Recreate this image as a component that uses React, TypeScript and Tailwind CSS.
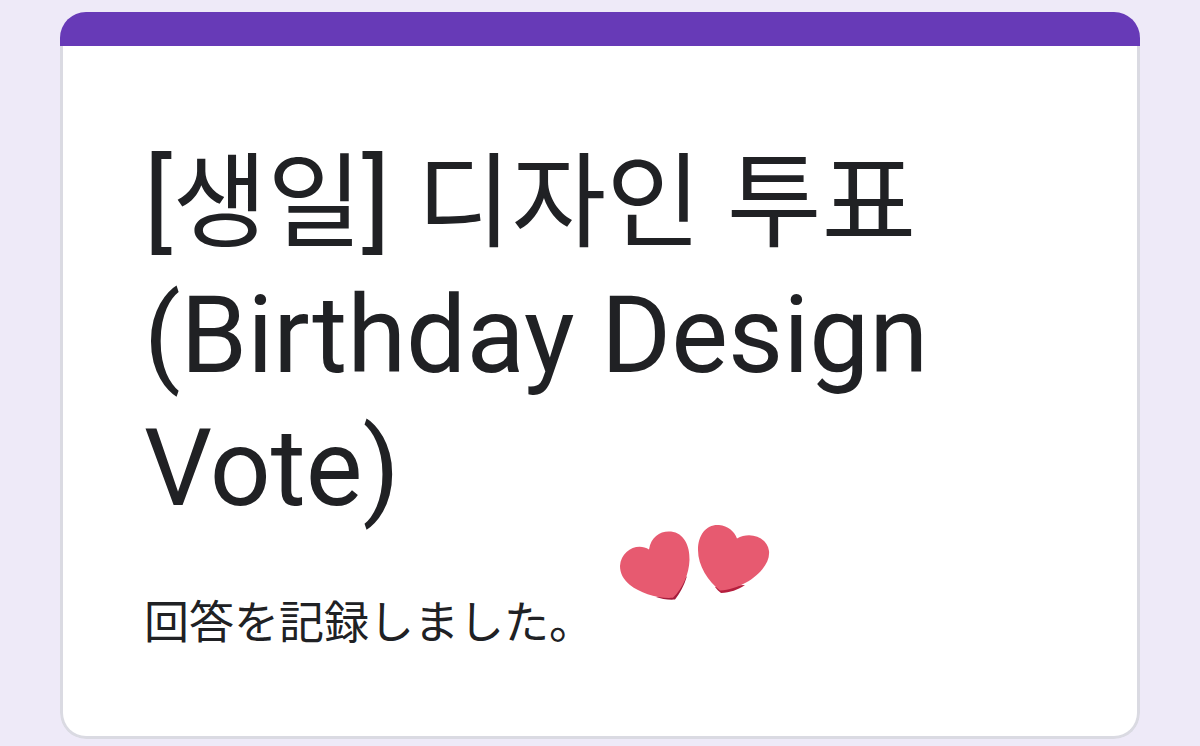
function Hearts() {
  return (
    <svg viewBox="0 0 190 110" className="absolute top-[498px] left-[540px] h-[110px] w-[190px]" role="img" aria-label="Two hearts">
      <path d="M75 89.5 C69 90 61 89 56 87 L70 84 L87 66 C84 76 80 83 75 89.5Z" fill="#a51d3c" />
      <path d="M73 87.8 C58 89 40 83 30 75 C23 69 20 63 20 56 C21 40 38 32 49 39.5 C51 26 61 20.5 71 21.5 C84 23 90 36 89.5 50 C89 64 83 78 73 87.8Z" fill="#e75a70" />
      <path d="M121 83 C119 81.5 117 79.5 115 77 L124 76 L145 75 C138 80 130 82.500 121 83Z" fill="#b51f3e" />
      <path d="M120 80.500 C108 71 98 56 98 40 C98 24 107 14 119 15 C128 16 134 21 137 28.5 C150 21 167 27 169 41 C171 58 146 79 120 80.500Z" fill="#e75a70" />
    </svg>
  );
}

export default function App() {
  return (
    <main className="min-h-screen bg-[#eeeaf8] px-[60px] pt-3 pb-2 text-[#202124]">
      <section className="relative overflow-hidden rounded-[26px]">
        <div className="h-[34px] bg-[#673ab7]" />
        <div className="rounded-b-[26px] border-x-[3px] border-b-[3px] border-[#dadae2] bg-white px-[81px] pt-[90px] pb-20">
          <h1 className="font-[Roboto,'Noto_Sans_CJK_KR',sans-serif] text-[107px] leading-[133px] font-normal">
            [<span className="text-[103px] leading-none">생일</span>]{' '}
            <span className="text-[103px] leading-none">디자인 투표</span> (Birthday Design Vote)
          </h1>
          <p className="mt-[57px] font-[Roboto,'Noto_Sans_CJK_JP',sans-serif] text-[45px] leading-[64px]">回答を記録しました。</p>
        </div>
        <Hearts />
      </section>
    </main>
  );
}
